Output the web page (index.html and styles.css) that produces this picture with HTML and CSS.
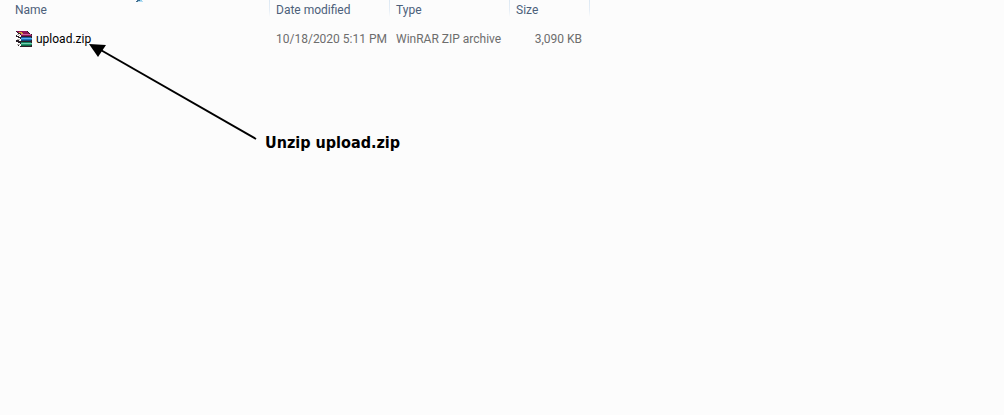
FILE: index.html
```html
<!DOCTYPE html>
<html lang="en">
<head>
<meta charset="utf-8">
<title>Files</title>
<link rel="stylesheet" href="styles.css">
</head>
<body>
<main class="explorer">
  <table class="files">
    <colgroup>
      <col class="col-name"><col class="col-date"><col class="col-type"><col class="col-size"><col>
    </colgroup>
    <thead>
      <tr>
        <th scope="col" aria-sort="ascending">Name
          <svg class="sort" width="8" height="2" viewBox="0 0 8 2" aria-hidden="true"><path d="M2 0h3v1H2z" fill="#3c7096"/><path d="M5 0h2v1H5z" fill="#8ecbea"/><path d="M1 1h2v1H1z" fill="#4b6f8c"/><path d="M3 1h5v1H3z" fill="#b4def3"/></svg>
        </th>
        <th scope="col">Date modified</th>
        <th scope="col">Type</th>
        <th scope="col">Size</th>
        <td></td>
      </tr>
    </thead>
    <tbody>
      <tr>
        <td>
          <span class="file">
            <svg width="17" height="16" viewBox="0 0 17 16" shape-rendering="crispEdges" aria-hidden="true">
              <path d="M1 0h12v1h1v1h1v1h2v13H5v-1H3v-1H1z" fill="#2a2028"/>
              <path d="M2 0h10v1h1v1h1v1h1v1H6V3H5V2H3V1H2z" fill="#8d1458"/>
              <path d="M6 3h10v1H6z" fill="#d0649c"/>
              <path d="M6 4h11v1H6z" fill="#8d1458"/>
              <path d="M1 1h1v1h1v1h2v1h1v2H4V5H2V4H1zM1 6h2v1h2v1h1v2H4V9H1zM1 11h2v1h2v1h1v2H4v-1H1z" fill="#fff"/>
              <path d="M2 3h2v1h1v1H4V4H2zM2 8h3v1H2zM2 13h3v1H2z" fill="#b9b4ae"/>
              <path d="M6 6h10v1H6z" fill="#1c5aa8"/>
              <path d="M6 7h11v1H6z" fill="#58b4ee"/>
              <path d="M6 8h11v1H6z" fill="#2070bc"/>
              <path d="M6 9h10v1H6z" fill="#124878"/>
              <path d="M6 11h10v1H6z" fill="#148060"/>
              <path d="M6 12h11v1H6z" fill="#70ceb0"/>
              <path d="M6 13h11v1H6z" fill="#20966c"/>
              <path d="M6 14h10v1H6z" fill="#126444"/>
              <path d="M4 1h3v1h1v1H6V2H4z" fill="#d8b426"/>
            </svg>
            <span>upload.zip</span>
          </span>
        </td>
        <td>10/18/2020 5:11 PM</td>
        <td>WinRAR ZIP archive</td>
        <td class="size">3,090 KB</td>
        <td></td>
      </tr>
    </tbody>
  </table>
  <div class="callout">
    <svg width="168" height="98" viewBox="0 0 168 98" aria-hidden="true">
      <path d="M10 6L167 96" stroke="#000" stroke-width="2"/>
      <path d="M0 1l17 1-8 12z" fill="#000"/>
    </svg>
    <strong>Unzip upload.zip</strong>
  </div>
</main>
</body>
</html>
```
FILE: styles.css
```css
body {
  margin: 0;
  background: #fcfcfc;
  font: 12px/16px Roboto, "Noto Sans", sans-serif;
  color: #6d6d6d;
}

.explorer {
  position: relative;
  min-height: 100vh;
}

.files {
  width: 100%;
  table-layout: fixed;
  border-collapse: collapse;
}

.col-name { width: 270px; }
.col-date,
.col-type { width: 120px; }
.col-size { width: 80px; }

.files th,
.files td {
  padding: 0 6px;
  text-align: left;
  font-weight: 400;
  white-space: nowrap;
}

.files th:first-child,
.files td:first-child {
  padding-left: 15px;
}

.files th {
  position: relative;
  height: 18px;
  padding-top: 1px;
  padding-bottom: 0;
  color: #4c607a;
  background: linear-gradient(#dce8f3, #e6eef6 60%, #fcfcfc) right top / 1px 17px no-repeat;
}

.sort {
  position: absolute;
  top: 0;
  left: 135px;
}

.files tbody td {
  height: 22px;
  padding-top: 9px;
}

.files .size {
  padding-right: 8px;
  text-align: right;
}

.file {
  display: flex;
  align-items: center;
  gap: 4px;
  color: #000;
}

.callout {
  position: absolute;
  top: 43px;
  left: 89px;
  display: flex;
  align-items: flex-end;
  gap: 8px;
  color: #000;
}

.callout strong {
  font: 700 16px/20px "DejaVu Sans Condensed", "Noto Sans", sans-serif;
  margin-bottom: -12px;
}
```
